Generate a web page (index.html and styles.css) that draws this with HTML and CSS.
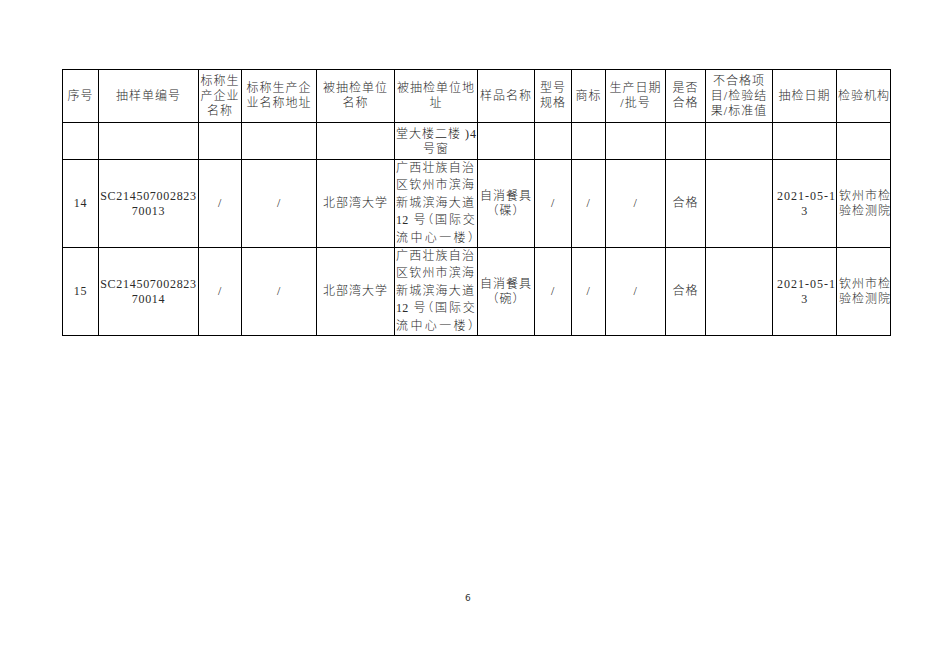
FILE: index.html
```html
<!DOCTYPE html>
<html lang="zh-CN">
<head>
<meta charset="utf-8">
<link rel="stylesheet" href="styles.css">
</head>
<body>
<div class="page">
<table class="grid">
<colgroup>
<col class="c1"><col class="c2"><col class="c3"><col class="c4"><col class="c5"><col class="c6"><col class="c7"><col class="c8"><col class="c9"><col class="c10"><col class="c11"><col class="c12"><col class="c13"><col class="c14">
</colgroup>
<tr class="head">
<td>序号</td>
<td>抽样单编号</td>
<td>标称生<br>产企业<br>名称</td>
<td>标称生产企<br>业名称地址</td>
<td>被抽检单位<br>名称</td>
<td>被抽检单位地<br>址</td>
<td>样品名称</td>
<td>型号<br>规格</td>
<td>商标</td>
<td>生产日期<br>/批号</td>
<td>是否<br>合格</td>
<td>不合格项<br>目/检验结<br>果/标准值</td>
<td>抽检日期</td>
<td>检验机构</td>
</tr>
<tr class="blank">
<td></td><td></td><td></td><td></td><td></td>
<td class="cont">堂大楼二楼 )4<br>号窗</td>
<td></td><td></td><td></td><td></td><td></td><td></td><td></td><td></td>
</tr>
<tr class="row">
<td class="lat">14</td>
<td class="lat">SC214507002823<br>70013</td>
<td class="lat">/</td>
<td class="lat">/</td>
<td>北部湾大学</td>
<td class="addr"><span>广西壮族自治</span><span>区钦州市滨海</span><span>新城滨海大道</span><span class="tight">12 号<i>（</i>国际交</span><span>流中心一楼<i>）</i></span></td>
<td>自消餐具<br>（碟）</td>
<td class="lat">/</td>
<td class="lat">/</td>
<td class="lat">/</td>
<td>合格</td>
<td></td>
<td class="lat date"><span class="d1">2021-05-1</span><span>3</span></td>
<td class="org">钦州市检<br>验检测院</td>
</tr>
<tr class="row">
<td class="lat">15</td>
<td class="lat">SC214507002823<br>70014</td>
<td class="lat">/</td>
<td class="lat">/</td>
<td>北部湾大学</td>
<td class="addr"><span>广西壮族自治</span><span>区钦州市滨海</span><span>新城滨海大道</span><span class="tight">12 号<i>（</i>国际交</span><span>流中心一楼<i>）</i></span></td>
<td>自消餐具<br>（碗）</td>
<td class="lat">/</td>
<td class="lat">/</td>
<td class="lat">/</td>
<td>合格</td>
<td></td>
<td class="lat date"><span class="d1">2021-05-1</span><span>3</span></td>
<td class="org">钦州市检<br>验检测院</td>
</tr>
</table>
<div class="pnum">6</div>
</div>
</body>
</html>
```
FILE: styles.css
```css
html, body {
  margin: 0;
  padding: 0;
  background: #fff;
}
.page {
  width: 933px;
  height: 659px;
  padding: 69px 0 0 62px;
  box-sizing: border-box;
}
.grid {
  border-collapse: collapse;
  table-layout: fixed;
  width: 828px;
  font-family: "Liberation Serif", "Noto Sans CJK SC", serif;
  font-size: 12px;
  font-weight: 300;
  color: #2a2a2a;
  letter-spacing: 1px;
}
.c1 { width: 36px; }
.c2 { width: 100px; }
.c3 { width: 43px; }
.c4 { width: 75px; }
.c5 { width: 78px; }
.c6 { width: 83px; }
.c7 { width: 57px; }
.c8 { width: 37px; }
.c9 { width: 34px; }
.c10 { width: 60px; }
.c11 { width: 40px; }
.c12 { width: 67px; }
.c13 { width: 64px; }
.c14 { width: 54px; }
.grid td {
  border: 1.3px solid #000;
  padding: 0 1px;
  text-align: center;
  vertical-align: middle;
  line-height: 15px;
  overflow: hidden;
  white-space: nowrap;
}
.head td { height: 52px; }
.blank td { height: 34px; }
.row td { height: 86px; }
.lat { letter-spacing: 0.7px; }
.grid td.addr { text-align: left; line-height: 17.4px; padding: 0 2px 0 1px; }
.addr span {
  display: block;
  text-align: justify;
  text-align-last: justify;
}
.addr i {
  font-style: normal;
  font-feature-settings: "halt" 1;
}
.addr .tight { letter-spacing: 0.3px; }
.grid td.cont { padding-top: 2px; }
.date span { display: block; }
.grid td.date { padding: 0; }
.date .d1 { text-align: right; letter-spacing: 1px; }
.grid td.org { text-align: left; padding-left: 2px; }
.pnum {
  margin: 256px 0 0 403px;
  font-family: "DejaVu Sans", sans-serif;
  font-size: 9px;
  color: #333;
  line-height: 12px;
}
```
